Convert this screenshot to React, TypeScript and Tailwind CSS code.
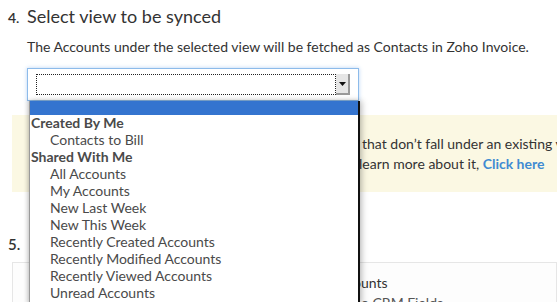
import React from "react";

const items = [
  "All Accounts",
  "My Accounts",
  "New Last Week",
  "New This Week",
  "Recently Created Accounts",
  "Recently Modified Accounts",
  "Recently Viewed Accounts",
  "Unread Accounts",
];

export default function App() {
  return (
    <div
      className="relative w-[557px] h-[302px] overflow-hidden bg-white text-[#333]"
      style={{ fontFamily: "Lato, 'Open Sans', sans-serif" }}
    >
      {/* Step 4 heading */}
      <div className="flex items-baseline pl-[8px] pt-[4px]">
        <span className="w-[19px] text-[14px] font-semibold">4.</span>
        <span className="text-[18px] leading-[24px]">Select view to be synced</span>
      </div>
      <p className="ml-[27px] mt-[10px] text-[14px] leading-[18px] whitespace-nowrap">
        The Accounts under the selected view will be fetched as Contacts in Zoho Invoice.
      </p>

      {/* Select */}
      <div className="relative z-10 ml-[27px] mt-[12px] w-[332px] h-[33px] border border-[#8dbbea] bg-white shadow-[0_0_4px_rgba(100,160,230,0.45)] px-[8px] pt-[5px]">
        <div className="flex h-[21px]">
          <div className="flex-1 border border-dotted border-[#222]"></div>
          <div className="w-[14px] h-[21px] bg-[#e6e6e6] border-r-2 border-b-2 border-[#9a9a9a] flex items-center justify-center">
            <svg width="7" height="4" viewBox="0 0 7 4">
              <path d="M0 0 L7 0 L3.5 4 Z" fill="#111" />
            </svg>
          </div>
        </div>

        {/* Dropdown list */}
        <div className="absolute left-[1px] top-[32px] w-[331px] h-[203px] bg-white border-l border-l-[#9a9a9a] border-r-2 border-r-[#111] border-b-2 border-b-[#111] shadow-[2px_0_6px_rgba(0,0,0,0.25),-2px_0_4px_rgba(0,0,0,0.15)] text-[14px] text-[#4a4a4a]">
          <div className="h-[14px] bg-[#3474cf]"></div>
          <div className="h-[17px] leading-[16px] pl-[1px] font-bold">Created By Me</div>
          <div className="h-[17px] leading-[16px] pl-[20px]">Contacts to Bill</div>
          <div className="h-[17px] leading-[16px] pl-[1px] font-bold">Shared With Me</div>
          {items.map((t) => (
            <div key={t} className="h-[17px] leading-[16px] pl-[20px]">
              {t}
            </div>
          ))}
        </div>
      </div>

      {/* Note panel */}
      <div className="ml-[12px] mt-[14px] h-[77px] bg-[#fbf8e3] pt-[19px] text-[14px] leading-[20px] whitespace-nowrap">
        <div className="pl-[350px]">that don’t fall under an existing view.</div>
        <div className="pl-[347px]">
          learn more about it, <span className="font-bold text-[#3f8bd2]">Click here</span>
        </div>
      </div>

      {/* Step 5 */}
      <div className="pl-[8px] mt-[42px] text-[15px] leading-[20px] font-semibold">5.</div>
      <div className="ml-[12px] mt-[8px] h-[60px] border border-[#e6e6e6] bg-[#fdfdfd] pt-[10px] text-[14px] leading-[20px] whitespace-nowrap">
        <div className="pl-[340px]">ounts</div>
        <div className="pl-[348px] text-[#555]">o CRM Fields</div>
      </div>
    </div>
  );
}
